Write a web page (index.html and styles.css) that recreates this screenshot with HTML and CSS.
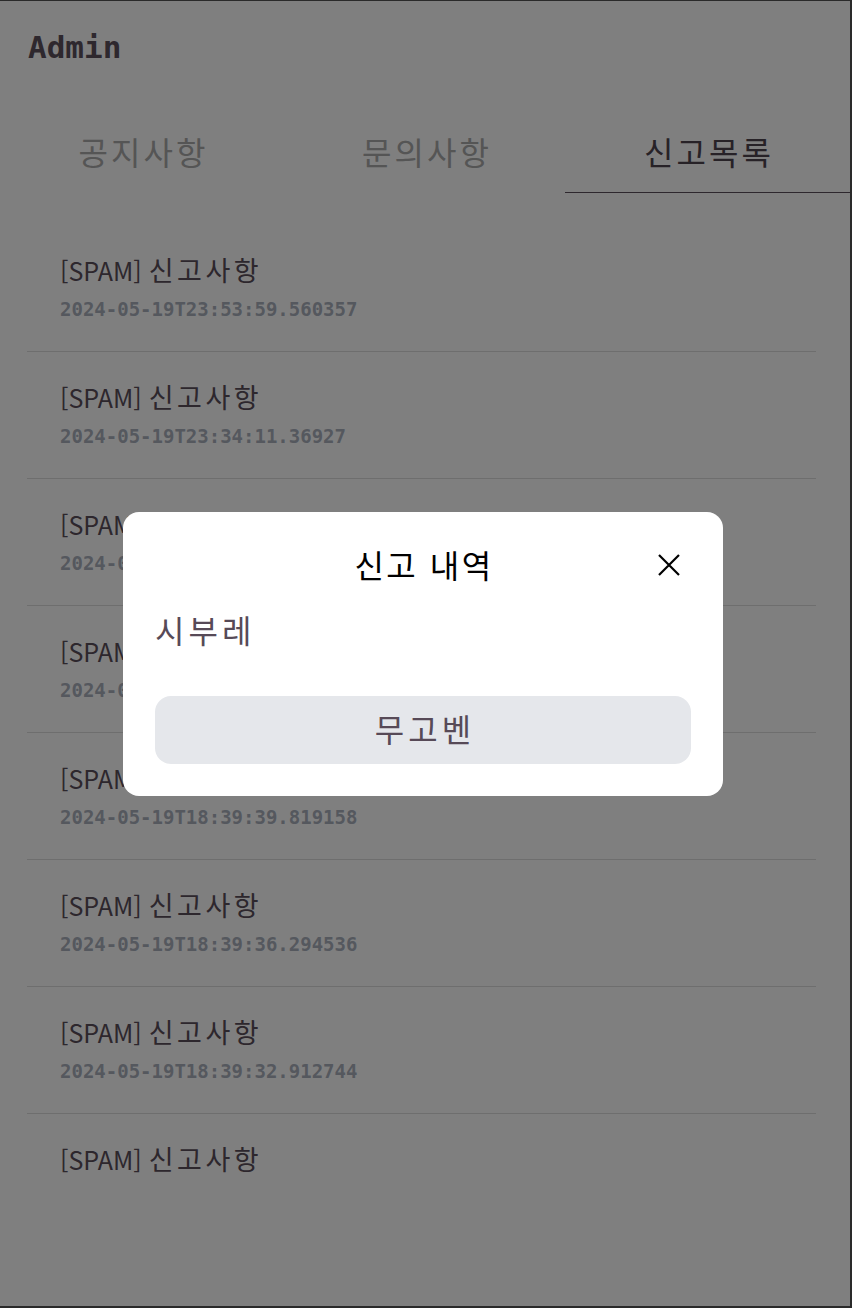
FILE: index.html
```html
<!DOCTYPE html>
<html lang="ko">
<head>
<meta charset="utf-8">
<title>Admin</title>
<link rel="stylesheet" href="styles.css">
</head>
<body>
<div class="frame">
  <header class="top">
    <h1 class="brand">Admin</h1>
  </header>
  <nav class="tabs">
    <div class="tab">공지사항</div>
    <div class="tab">문의사항</div>
    <div class="tab active">신고목록</div>
  </nav>
  <ul class="list">
    <li class="item"><div class="title">[SPAM] <span class="ko">신고사항</span></div><div class="date">2024-05-19T23:53:59.560357</div></li>
    <li class="item"><div class="title">[SPAM] <span class="ko">신고사항</span></div><div class="date">2024-05-19T23:34:11.36927</div></li>
    <li class="item"><div class="title">[SPAM] <span class="ko">신고사항</span></div><div class="date">2024-05-19T22:10:05.123456</div></li>
    <li class="item"><div class="title">[SPAM] <span class="ko">신고사항</span></div><div class="date">2024-05-19T20:41:17.482910</div></li>
    <li class="item"><div class="title">[SPAM] <span class="ko">신고사항</span></div><div class="date">2024-05-19T18:39:39.819158</div></li>
    <li class="item"><div class="title">[SPAM] <span class="ko">신고사항</span></div><div class="date">2024-05-19T18:39:36.294536</div></li>
    <li class="item"><div class="title">[SPAM] <span class="ko">신고사항</span></div><div class="date">2024-05-19T18:39:32.912744</div></li>
    <li class="item last"><div class="title">[SPAM] <span class="ko">신고사항</span></div></li>
  </ul>
</div>
<div class="overlay">
  <div class="modal">
    <div class="modal-head">
      <h2 class="modal-title">신고 내역</h2>
      <button class="close" aria-label="닫기">
        <svg width="24" height="24" viewBox="0 0 24 24"><path d="M2 2 L22 22 M22 2 L2 22" stroke="#000" stroke-width="2.2" fill="none"/></svg>
      </button>
    </div>
    <p class="modal-body">시부레</p>
    <button class="confirm">무고벤</button>
  </div>
</div>
</body>
</html>
```
FILE: styles.css
```css
* { box-sizing: border-box; }
html, body { margin: 0; padding: 0; }
body {
  background: #fff;
  font-family: "Noto Sans CJK KR", "Noto Sans", sans-serif;
  color: #574a57;
}
.frame {
  width: 852px;
  height: 1308px;
  border-top: 1px solid #555;
  border-right: 2px solid #555;
  border-bottom: 2px solid #555;
  overflow: hidden;
}
.top {
  padding: 26px 0 0 28px;
  height: 112px;
}
.brand {
  margin: 0;
  font-family: "DejaVu Sans Mono", monospace;
  font-weight: bold;
  font-size: 31px;
  line-height: 40px;
  color: #5c505c;
}
.tabs {
  display: grid;
  grid-template-columns: 284px 283px 1fr;
  height: 80px;
}
.tab {
  display: flex;
  align-items: center;
  justify-content: center;
  font-size: 32px;
  letter-spacing: 3px;
  padding-left: 3px;
  color: #aaaaaa;
  padding-bottom: 4px;
}
.tab.active {
  color: #4f454f;
  border-bottom: 1px solid #5c505c;
  margin-left: -2px;
}
.list {
  list-style: none;
  margin: 32px 34px 0 27px;
  padding: 0;
}
.item {
  padding: 28px 33px 31px;
  border-bottom: 1px solid #dddddd;
}
.item.last { border-bottom: none; }
.title {
  font-size: 25px;
  line-height: 34px;
  color: #5a4e5a;
  white-space: nowrap;
}
.title .ko {
  font-size: 27px;
  letter-spacing: 3.5px;
}
.date {
  margin-top: 11px;
  font-family: "DejaVu Sans Mono", monospace;
  font-weight: bold;
  font-size: 19px;
  line-height: 22px;
  color: #aab0bd;
}
.overlay {
  position: fixed;
  inset: 0;
  background: rgba(0, 0, 0, 0.5);
  display: flex;
  align-items: flex-start;
  justify-content: center;
  padding-top: 512px;
  padding-right: 6px;
}
.modal {
  width: 600px;
  background: #fff;
  border-radius: 16px;
  padding: 32px;
}
.modal-head {
  position: relative;
  height: 44px;
  display: flex;
  align-items: center;
  justify-content: center;
  padding-bottom: 4px;
}
.modal-title {
  margin: 0;
  font-size: 32px;
  letter-spacing: 2.5px;
  padding-left: 2px;
  font-weight: normal;
  color: #000;
  line-height: 40px;
}
.close {
  position: absolute;
  right: 10px;
  top: 9px;
  width: 24px;
  height: 24px;
  padding: 0;
  border: 0;
  background: transparent;
}
.close svg { display: block; }
.modal-body {
  margin: 22px 0 0;
  font-size: 32px;
  letter-spacing: 4px;
  line-height: 38px;
  color: #574a57;
}
.confirm {
  display: block;
  width: 100%;
  height: 68px;
  margin-top: 48px;
  padding: 0 0 4px 4px;
  border: 0;
  border-radius: 16px;
  background: #e5e7eb;
  font-family: "Noto Sans CJK KR", "Noto Sans", sans-serif;
  font-size: 32px;
  letter-spacing: 4px;
  color: #574a57;
}
```
